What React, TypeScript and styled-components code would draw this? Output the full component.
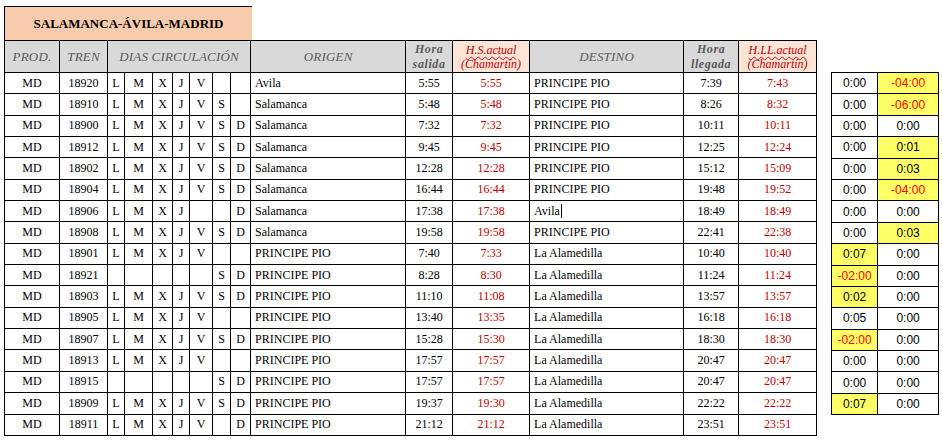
import React from 'react';
import styled, { createGlobalStyle } from 'styled-components';

const GlobalStyle = createGlobalStyle`
  body {
    margin: 0;
    background: #fff;
    font-family: 'Liberation Serif', 'Times New Roman', serif;
  }
`;

const Page = styled.div`
  display: flex;
  align-items: flex-start;
  padding: 6px 0 0 4px;
  width: 942px;
  height: 440px;
  box-sizing: border-box;
`;

const Left = styled.div`
  display: flex;
  flex-direction: column;
`;

const Title = styled.div`
  width: 248px;
  height: 34px;
  box-sizing: border-box;
  border-top: 1px solid #000;
  border-left: 1px solid #000;
  background: #f8cbad;
  display: flex;
  align-items: center;
  justify-content: center;
  font-family: 'Liberation Serif', 'Times New Roman', serif;
  font-weight: bold;
  font-size: 13px;
  color: #000;
  padding-top: 1px;
`;

const Table = styled.table`
  border-collapse: collapse;
  table-layout: fixed;
  width: 812px;
  font-family: 'Liberation Serif', 'Times New Roman', serif;
  font-size: 12px;
  color: #000;
`;

const HeadRow = styled.tr`
  height: 32px;
`;

const Th = styled.th<{ $peach?: boolean }>`
  border: 1px solid #000;
  background: ${(p) => (p.$peach ? '#fce4d6' : '#d9d9d9')};
  font-family: 'Liberation Serif', 'Times New Roman', serif;
  font-style: italic;
  font-weight: normal;
  font-size: 13px;
  color: #595959;
  padding: 0;
  text-align: center;
  white-space: nowrap;
  letter-spacing: 0.2px;
`;

const BoldTh = styled(Th)`
  font-weight: bold;
  font-size: 12px;
  line-height: 15px;
  letter-spacing: 0.6px;
`;

const ActualTh = styled(Th)`
  color: #c00000;
  font-size: 12px;
  line-height: 14px;
  letter-spacing: 0;
`;

const Wavy = styled.span`
  text-decoration: underline wavy #ff0000;
  text-decoration-thickness: 1px;
  text-underline-offset: 2px;
`;

const Row = styled.tr`
  height: 21.35px;
`;

const Td = styled.td<{ $align?: 'left' | 'center'; $red?: boolean }>`
  border: 1px solid #000;
  font-family: 'Liberation Serif', 'Times New Roman', serif;
  font-size: 12px;
  padding: 0 ${(p) => (p.$align === 'left' ? '4px' : '0')};
  text-align: ${(p) => p.$align || 'center'};
  color: ${(p) => (p.$red ? '#c00000' : '#000')};
  white-space: nowrap;
  overflow: hidden;
`;

const Caret = styled.span`
  display: inline-block;
  width: 1px;
  height: 14px;
  background: #000;
  vertical-align: -3px;
  margin-left: 1px;
`;

const SideTable = styled.table`
  border-collapse: collapse;
  table-layout: fixed;
  width: 107px;
  margin: 66px 0 0 14px;
`;

const SideRow = styled.tr`
  height: 21.4px;
`;

const SideTd = styled.td<{ $hl?: boolean; $neg?: boolean }>`
  border: 1px solid #000;
  text-align: center;
  padding: 0;
  font-family: 'Liberation Sans', Arial, sans-serif;
  font-size: 12px;
  background: ${(p) => (p.$hl ? '#ffff66' : '#fff')};
  color: ${(p) => (p.$neg ? '#ff0000' : '#000')};
`;

const colWidths = [55, 48, 17, 28, 20, 17, 23, 18, 20, 155, 47, 77, 154, 55, 78];

type Train = {
  tren: string;
  days: string;
  origen: string;
  salida: string;
  salidaAct: string;
  destino: string;
  llegada: string;
  llegadaAct: string;
  caret?: boolean;
};

const trains: Train[] = [
  { tren: '18920', days: 'LMXJV__', origen: 'Avila', salida: '5:55', salidaAct: '5:55', destino: 'PRINCIPE PIO', llegada: '7:39', llegadaAct: '7:43' },
  { tren: '18910', days: 'LMXJVS_', origen: 'Salamanca', salida: '5:48', salidaAct: '5:48', destino: 'PRINCIPE PIO', llegada: '8:26', llegadaAct: '8:32' },
  { tren: '18900', days: 'LMXJVSD', origen: 'Salamanca', salida: '7:32', salidaAct: '7:32', destino: 'PRINCIPE PIO', llegada: '10:11', llegadaAct: '10:11' },
  { tren: '18912', days: 'LMXJVSD', origen: 'Salamanca', salida: '9:45', salidaAct: '9:45', destino: 'PRINCIPE PIO', llegada: '12:25', llegadaAct: '12:24' },
  { tren: '18902', days: 'LMXJVSD', origen: 'Salamanca', salida: '12:28', salidaAct: '12:28', destino: 'PRINCIPE PIO', llegada: '15:12', llegadaAct: '15:09' },
  { tren: '18904', days: 'LMXJVSD', origen: 'Salamanca', salida: '16:44', salidaAct: '16:44', destino: 'PRINCIPE PIO', llegada: '19:48', llegadaAct: '19:52' },
  { tren: '18906', days: 'LMXJ__D', origen: 'Salamanca', salida: '17:38', salidaAct: '17:38', destino: 'Avila', llegada: '18:49', llegadaAct: '18:49', caret: true },
  { tren: '18908', days: 'LMXJVSD', origen: 'Salamanca', salida: '19:58', salidaAct: '19:58', destino: 'PRINCIPE PIO', llegada: '22:41', llegadaAct: '22:38' },
  { tren: '18901', days: 'LMXJV__', origen: 'PRINCIPE PIO', salida: '7:40', salidaAct: '7:33', destino: 'La Alamedilla', llegada: '10:40', llegadaAct: '10:40' },
  { tren: '18921', days: '_____SD', origen: 'PRINCIPE PIO', salida: '8:28', salidaAct: '8:30', destino: 'La Alamedilla', llegada: '11:24', llegadaAct: '11:24' },
  { tren: '18903', days: 'LMXJVSD', origen: 'PRINCIPE PIO', salida: '11:10', salidaAct: '11:08', destino: 'La Alamedilla', llegada: '13:57', llegadaAct: '13:57' },
  { tren: '18905', days: 'LMXJV__', origen: 'PRINCIPE PIO', salida: '13:40', salidaAct: '13:35', destino: 'La Alamedilla', llegada: '16:18', llegadaAct: '16:18' },
  { tren: '18907', days: 'LMXJVSD', origen: 'PRINCIPE PIO', salida: '15:28', salidaAct: '15:30', destino: 'La Alamedilla', llegada: '18:30', llegadaAct: '18:30' },
  { tren: '18913', days: 'LMXJV__', origen: 'PRINCIPE PIO', salida: '17:57', salidaAct: '17:57', destino: 'La Alamedilla', llegada: '20:47', llegadaAct: '20:47' },
  { tren: '18915', days: '_____SD', origen: 'PRINCIPE PIO', salida: '17:57', salidaAct: '17:57', destino: 'La Alamedilla', llegada: '20:47', llegadaAct: '20:47' },
  { tren: '18909', days: 'LMXJVSD', origen: 'PRINCIPE PIO', salida: '19:37', salidaAct: '19:30', destino: 'La Alamedilla', llegada: '22:22', llegadaAct: '22:22' },
  { tren: '18911', days: 'LMXJV_D', origen: 'PRINCIPE PIO', salida: '21:12', salidaAct: '21:12', destino: 'La Alamedilla', llegada: '23:51', llegadaAct: '23:51' },
];

// [salida diff, llegada diff]
const diffs: [string, string][] = [
  ['0:00', '-04:00'],
  ['0:00', '-06:00'],
  ['0:00', '0:00'],
  ['0:00', '0:01'],
  ['0:00', '0:03'],
  ['0:00', '-04:00'],
  ['0:00', '0:00'],
  ['0:00', '0:03'],
  ['0:07', '0:00'],
  ['-02:00', '0:00'],
  ['0:02', '0:00'],
  ['0:05', '0:00'],
  ['-02:00', '0:00'],
  ['0:00', '0:00'],
  ['0:00', '0:00'],
  ['0:07', '0:00'],
];

const Diff = ({ value, highlight }: { value: string; highlight: boolean }) => (
  <SideTd $hl={highlight} $neg={value.startsWith('-')}>
    {value}
  </SideTd>
);

const App = () => (
  <>
    <GlobalStyle />
    <Page>
      <Left>
        <Title>SALAMANCA-ÁVILA-MADRID</Title>
        <Table>
          <colgroup>
            {colWidths.map((w, i) => (
              <col key={i} style={{ width: w }} />
            ))}
          </colgroup>
          <thead>
            <HeadRow>
              <Th>PROD.</Th>
              <Th>TREN</Th>
              <Th colSpan={7}>DIAS CIRCULACIÓN</Th>
              <Th>ORIGEN</Th>
              <BoldTh>
                Hora
                <br />
                salida
              </BoldTh>
              <ActualTh $peach>
                <Wavy>H.S.actual</Wavy>
                <br />
                (Chamartín)
              </ActualTh>
              <Th>DESTINO</Th>
              <BoldTh>
                Hora
                <br />
                llegada
              </BoldTh>
              <ActualTh $peach>
                <Wavy>H.LL.actual</Wavy>
                <br />
                (Chamartín)
              </ActualTh>
            </HeadRow>
          </thead>
          <tbody>
            {trains.map((t) => (
              <Row key={t.tren}>
                <Td>MD</Td>
                <Td>{t.tren}</Td>
                {t.days.split('').map((d, i) => (
                  <Td key={i}>{d === '_' ? '' : d}</Td>
                ))}
                <Td $align="left">{t.origen}</Td>
                <Td>{t.salida}</Td>
                <Td $red>{t.salidaAct}</Td>
                <Td $align="left">
                  {t.destino}
                  {t.caret && <Caret />}
                </Td>
                <Td>{t.llegada}</Td>
                <Td $red>{t.llegadaAct}</Td>
              </Row>
            ))}
          </tbody>
        </Table>
      </Left>
      <SideTable>
        <colgroup>
          <col style={{ width: 46 }} />
          <col style={{ width: 61 }} />
        </colgroup>
        <tbody>
          {diffs.map(([a, b], i) => (
            <SideRow key={i}>
              <Diff value={a} highlight={a !== '0:00' && a !== '0:05'} />
              <Diff value={b} highlight={b !== '0:00'} />
            </SideRow>
          ))}
        </tbody>
      </SideTable>
    </Page>
  </>
);

export default App;
